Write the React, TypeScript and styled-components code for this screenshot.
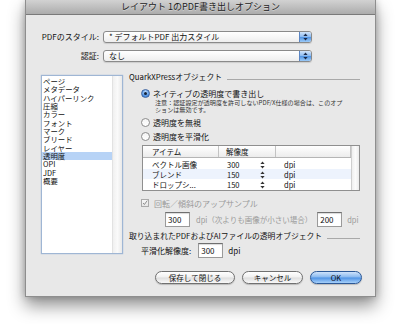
import React from "react";
import styled, { createGlobalStyle } from "styled-components";

const Global = createGlobalStyle`
  html, body { margin: 0; padding: 0; background: #fff; }
  body { font-family: "Noto Sans CJK JP", "Liberation Sans", sans-serif; color: #111; }
  #root { width: 401px; height: 324px; overflow: hidden; }
`;

const Stage = styled.div`
  width: 401px;
  height: 324px;
  box-sizing: border-box;
  padding-left: 25px;
  background: #fff;
`;

const Window = styled.div`
  width: 351px;
  height: 297px;
  box-sizing: border-box;
  background: #e8e8e8;
  border: 1px solid #8e8e8e;
  border-top: none;
  box-shadow: 0 9px 16px rgba(0, 0, 0, 0.42), 0 0 7px rgba(0, 0, 0, 0.22);
  display: flex;
  flex-direction: column;
`;

const TitleBar = styled.div`
  height: 14px;
  border-bottom: 1px solid #7a7a7a;
  background: linear-gradient(#d2d2d2, #acacac);
  font-size: 9px;
  line-height: 14px;
  text-align: center;
  color: #1e1e1e;
  text-shadow: 0 1px 0 rgba(255, 255, 255, 0.35);
`;

const FormRow = styled.div<{ $top: number }>`
  display: flex;
  align-items: center;
  height: 12px;
  margin-top: ${(p) => p.$top}px;
`;

const FieldLabel = styled.div`
  width: 73px;
  text-align: right;
  font-size: 8px;
  line-height: 12px;
  margin-right: 4px;
  white-space: nowrap;
`;

const Select = styled.div`
  width: 209px;
  height: 12px;
  box-sizing: border-box;
  border: 1px solid #8a8a8a;
  border-radius: 3px;
  background: linear-gradient(#ffffff, #eeeeee);
  display: flex;
  align-items: center;
  overflow: hidden;
  box-shadow: 0 1px 1px rgba(0, 0, 0, 0.12);
`;

const SelectText = styled.span`
  font-size: 8px;
  line-height: 10px;
  padding-left: 5px;
  white-space: nowrap;
`;

const SelectCap = styled.div`
  margin-left: auto;
  width: 11px;
  height: 100%;
  border-left: 1px solid #5b86c4;
  background: linear-gradient(#d3e5fa, #8cbaf0 48%, #4f93e3 52%, #9ccaf7);
  display: flex;
  align-items: center;
  justify-content: center;
`;

const Main = styled.div`
  display: flex;
  margin-top: 10px;
  padding-left: 15px;
`;

const List = styled.div`
  width: 82px;
  height: 179px;
  margin-top: 3px;
  box-sizing: border-box;
  border: 1px solid #9fb6d4;
  background: #fff;
  display: flex;
  box-shadow: 0 0 1px rgba(90, 140, 210, 0.6);
`;

const ListItems = styled.div`
  flex: 1;
  padding-top: 1px;
`;

const ListItem = styled.div<{ $sel?: boolean }>`
  height: 8.33px;
  line-height: 8.33px;
  font-size: 7.4px;
  padding-left: 1px;
  white-space: nowrap;
  background: ${(p) => (p.$sel ? "#b7d3f6" : "transparent")};
`;

const ListScroll = styled.div`
  width: 9px;
  border-left: 1px solid #e2e2e2;
  background: linear-gradient(90deg, #f0f0f0, #fafafa 50%, #e9e9e9);
`;

const Panel = styled.div`
  width: 231px;
  margin-left: 6px;
  display: flex;
  flex-direction: column;
`;

const SectionHead = styled.div<{ $top: number }>`
  display: flex;
  align-items: center;
  height: 10px;
  margin-top: ${(p) => p.$top}px;
`;

const SectionTitle = styled.span`
  font-size: 7.8px;
  line-height: 10px;
  white-space: nowrap;
`;

const SectionRule = styled.div`
  flex: 1;
  height: 1px;
  background: #a9a9a9;
  margin-left: 5px;
  margin-top: 5px;
`;

const OptionRow = styled.div<{ $top: number; $dim?: boolean }>`
  display: flex;
  align-items: center;
  height: 10px;
  margin-top: ${(p) => p.$top}px;
  padding-left: 12px;
  font-size: 8px;
  color: ${(p) => (p.$dim ? "#9a9a9a" : "#111")};
  white-space: nowrap;
`;

const Radio = styled.span<{ $on?: boolean }>`
  width: 9px;
  height: 9px;
  box-sizing: border-box;
  border-radius: 50%;
  margin-right: 3px;
  display: flex;
  align-items: center;
  justify-content: center;
  border: 1px solid ${(p) => (p.$on ? "#3b62a0" : "#8c8c8c")};
  background: ${(p) =>
    p.$on
      ? "radial-gradient(circle at 50% 30%, #bcdcff, #4b8ee0 70%)"
      : "linear-gradient(#f4f4f4, #ffffff)"};
  &::after {
    content: "";
    display: ${(p) => (p.$on ? "block" : "none")};
    width: 3px;
    height: 3px;
    border-radius: 50%;
    background: #10203a;
  }
`;

const Note = styled.div`
  margin-top: 2px;
  padding-left: 26px;
  font-size: 6.1px;
  line-height: 6.5px;
  color: #333;
  white-space: nowrap;
`;

const Table = styled.div`
  margin-top: 4px;
  margin-left: 13px;
  width: 218px;
  height: 46px;
  box-sizing: border-box;
  border: 1px solid #8f8f8f;
  background: #fff;
  display: flex;
`;

const TableBody = styled.div`
  flex: 1;
  display: flex;
  flex-direction: column;
`;

const HeadRow = styled.div`
  display: grid;
  grid-template-columns: 76px 57px 1fr;
  height: 11px;
  border-bottom: 1px solid #b5b5b5;
  background: linear-gradient(#ffffff, #ececec);
  margin-bottom: 1px;
`;

const HeadCell = styled.div<{ $pad: number }>`
  font-size: 7.5px;
  line-height: 11px;
  padding-left: ${(p) => p.$pad}px;
  border-right: 1px solid #c3c3c3;
  white-space: nowrap;
`;

const DataRow = styled.div<{ $alt?: boolean }>`
  display: grid;
  grid-template-columns: 75px 33px 1fr;
  align-items: center;
  height: 10px;
  padding-left: 9px;
  font-size: 7.5px;
  background: ${(p) => (p.$alt ? "#edf3fd" : "transparent")};
  white-space: nowrap;
`;

const Value = styled.span`
  display: flex;
  align-items: center;
`;

const TableScroll = styled.div`
  width: 7px;
  border-left: 1px solid #cfcfcf;
  background: linear-gradient(90deg, #efefef, #fbfbfb 50%, #ebebeb);
`;

const Check = styled.span`
  width: 8px;
  height: 8px;
  box-sizing: border-box;
  border: 1px solid #aaa;
  background: linear-gradient(#f7f7f7, #e6e6e6);
  margin-right: 5px;
  display: flex;
  align-items: center;
  justify-content: center;
`;

const InputRow = styled.div<{ $top: number; $pad: number }>`
  display: flex;
  align-items: center;
  height: 15px;
  margin-top: ${(p) => p.$top}px;
  padding-left: ${(p) => p.$pad}px;
  font-size: 8px;
  white-space: nowrap;
`;

const Input = styled.div`
  width: 25px;
  height: 15px;
  box-sizing: border-box;
  border: 1px solid #9a9a9a;
  border-top-color: #6f6f6f;
  background: #fff;
  box-shadow: inset 0 1px 1px rgba(0, 0, 0, 0.15);
  font-size: 8px;
  line-height: 13px;
  padding-left: 2px;
  color: #111;
`;

const Muted = styled.span<{ $l: number; $r: number }>`
  color: #9a9a9a;
  font-size: 7.5px;
  margin-left: ${(p) => p.$l}px;
  margin-right: ${(p) => p.$r}px;
`;

const Plain = styled.span<{ $l: number; $r: number }>`
  margin-left: ${(p) => p.$l}px;
  margin-right: ${(p) => p.$r}px;
`;

const Buttons = styled.div`
  display: flex;
  justify-content: flex-end;
  gap: 7px;
  margin-top: 13px;
  padding-right: 13px;
`;

const Button = styled.div<{ $w: number; $primary?: boolean }>`
  width: ${(p) => p.$w}px;
  height: 13px;
  box-sizing: border-box;
  border-radius: 7px;
  border: 1px solid ${(p) => (p.$primary ? "#2c5896" : "#707070")};
  background: ${(p) =>
    p.$primary
      ? "linear-gradient(#cfe3fb, #86b7ef 48%, #4e92e4 52%, #a6d0fa)"
      : "linear-gradient(#ffffff, #f0f0f0 48%, #dedede 52%, #f8f8f8)"};
  box-shadow: 0 1px 1px rgba(0, 0, 0, 0.2);
  font-size: 7.5px;
  line-height: 11px;
  text-align: center;
  color: #111;
  white-space: nowrap;
`;

const UpDown = ({ color = "#1b2a48" }: { color?: string }) => (
  <svg width="5" height="8" viewBox="0 0 5 8">
    <path d="M2.5 0.5 L4.6 3 L0.4 3 Z" fill={color} />
    <path d="M2.5 7.5 L4.6 5 L0.4 5 Z" fill={color} />
  </svg>
);

const CheckMark = () => (
  <svg width="8" height="8" viewBox="0 0 8 8">
    <path d="M1.5 4 L3.2 6 L7 0.8" stroke="#8a8a8a" strokeWidth="1.3" fill="none" />
  </svg>
);

const items = [
  "ページ",
  "メタデータ",
  "ハイパーリンク",
  "圧縮",
  "カラー",
  "フォント",
  "マーク",
  "ブリード",
  "レイヤー",
  "透明度",
  "OPI",
  "JDF",
  "概要",
];

const rows = [
  { name: "ベクトル画像", v: "300" },
  { name: "ブレンド", v: "150", alt: true },
  { name: "ドロップシ...", v: "150" },
];

export default function App() {
  return (
    <Stage>
      <Global />
      <Window>
        <TitleBar>レイアウト 1のPDF書き出しオプション</TitleBar>
        <FormRow $top={16}>
          <FieldLabel>PDFのスタイル:</FieldLabel>
          <Select>
            <SelectText>* デフォルトPDF 出力スタイル</SelectText>
            <SelectCap>
              <UpDown />
            </SelectCap>
          </Select>
        </FormRow>
        <FormRow $top={7}>
          <FieldLabel>認証:</FieldLabel>
          <Select>
            <SelectText>なし</SelectText>
            <SelectCap>
              <UpDown />
            </SelectCap>
          </Select>
        </FormRow>
        <Main>
          <List>
            <ListItems>
              {items.map((it) => (
                <ListItem key={it} $sel={it === "透明度"}>
                  {it}
                </ListItem>
              ))}
            </ListItems>
            <ListScroll />
          </List>
          <Panel>
            <SectionHead $top={0}>
              <SectionTitle>QuarkXPressオブジェクト</SectionTitle>
              <SectionRule />
            </SectionHead>
            <OptionRow $top={6}>
              <Radio $on />
              ネイティブの透明度で書き出し
            </OptionRow>
            <Note>
              注意：認証設定が透明度を許可しないPDF/X仕様の場合は、このオプ
              <br />
              ションは無効です。
            </Note>
            <OptionRow $top={4.5}>
              <Radio />
              透明度を無視
            </OptionRow>
            <OptionRow $top={3.5}>
              <Radio />
              透明度を平滑化
            </OptionRow>
            <Table>
              <TableBody>
                <HeadRow>
                  <HeadCell $pad={9}>アイテム</HeadCell>
                  <HeadCell $pad={7}>解像度</HeadCell>
                  <HeadCell $pad={0} />
                </HeadRow>
                {rows.map((r) => (
                  <DataRow key={r.name} $alt={r.alt}>
                    <span>{r.name}</span>
                    <Value>{r.v}</Value>
                    <Value>
                      <UpDown color="#333" />
                      <Plain $l={19} $r={0}>dpi</Plain>
                    </Value>
                  </DataRow>
                ))}
              </TableBody>
              <TableScroll />
            </Table>
            <OptionRow $top={7} $dim>
              <Check>
                <CheckMark />
              </Check>
              回転／傾斜のアップサンプル
            </OptionRow>
            <InputRow $top={4} $pad={36}>
              <Input>300</Input>
              <Muted $l={6} $r={5}>dpi（次よりも画像が小さい場合）</Muted>
              <Input>200</Input>
              <Muted $l={5} $r={0}>dpi</Muted>
            </InputRow>
            <SectionHead $top={3.5}>
              <SectionTitle>取り込まれたPDFおよびAIファイルの透明オブジェクト</SectionTitle>
              <SectionRule />
            </SectionHead>
            <InputRow $top={2.5} $pad={12}>
              <Plain $l={0} $r={7}>平滑化解像度:</Plain>
              <Input>300</Input>
              <Plain $l={5} $r={0}>dpi</Plain>
            </InputRow>
          </Panel>
        </Main>
        <Buttons>
          <Button $w={80}>保存して閉じる</Button>
          <Button $w={61}>キャンセル</Button>
          <Button $w={52} $primary>
            OK
          </Button>
        </Buttons>
      </Window>
    </Stage>
  );
}
